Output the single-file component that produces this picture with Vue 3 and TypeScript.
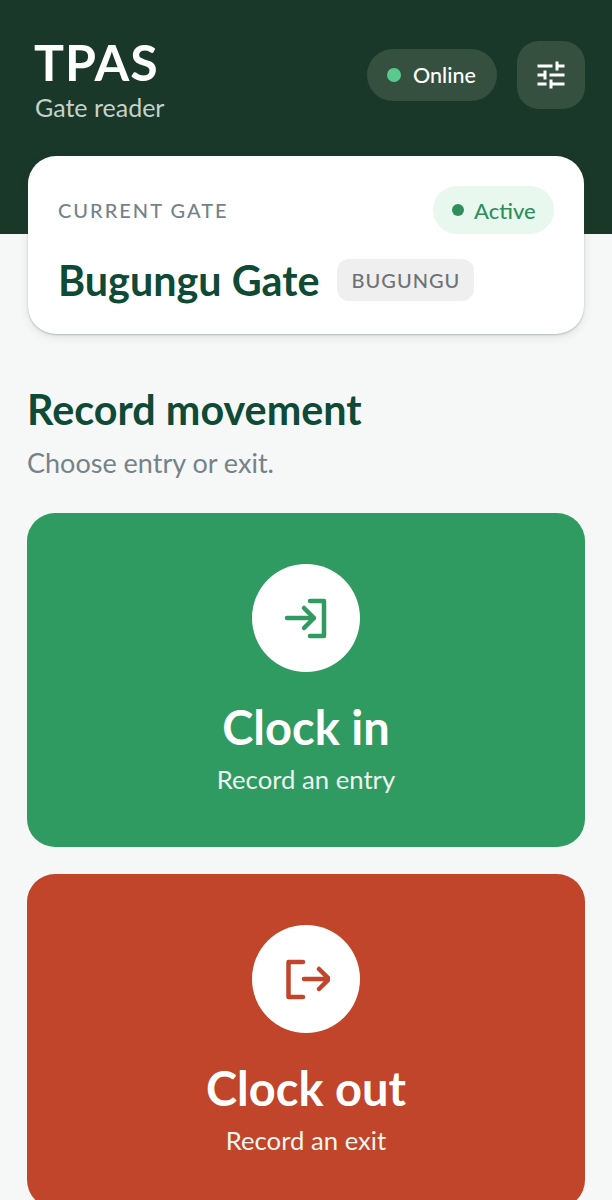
<script setup lang="ts">
const actions = [
  { key: 'in', title: 'Clock in', sub: 'Record an entry' },
  { key: 'out', title: 'Clock out', sub: 'Record an exit' },
];
</script>

<template>
  <div class="page">
    <header class="header">
      <div class="brand">
        <h1 class="title">TPAS</h1>
        <p class="subtitle">Gate reader</p>
      </div>
      <div class="tools">
        <div class="online"><span class="online-dot"></span>Online</div>
        <button class="settings" aria-label="Settings">
          <svg width="36" height="36" viewBox="0 0 24 24" fill="#fff">
            <path d="M3 17v2h6v-2H3zM3 5v2h10V5H3zm10 16v-2h8v-2h-8v-2h-2v6h2zM7 9v2H3v2h4v2h2V9H7zm14 4v-2H11v2h10zm-6-4h2V7h4V5h-4V3h-2v6z" />
          </svg>
        </button>
      </div>
    </header>

    <main class="main">
      <section class="gate-card">
        <div class="gate-top">
          <span class="gate-label">CURRENT GATE</span>
          <span class="active"><span class="active-dot"></span>Active</span>
        </div>
        <div class="gate-row">
          <span class="gate-name">Bugungu Gate</span>
          <span class="gate-code">BUGUNGU</span>
        </div>
      </section>

      <h2 class="section-title">Record movement</h2>
      <p class="section-sub">Choose entry or exit.</p>

      <div class="actions">
        <button v-for="a in actions" :key="a.key" class="action" :class="a.key">
          <span class="circle">
            <svg v-if="a.key === 'in'" width="48" height="48" viewBox="0 0 48 48" fill="none" stroke="#2f9b60" stroke-width="4.5" stroke-linecap="round" stroke-linejoin="round">
              <path d="M28 7h14v35H28" />
              <path d="M5 24h27M22 14l10 10-10 10" />
            </svg>
            <svg v-else width="48" height="48" viewBox="0 0 48 48" fill="none" stroke="#c0452a" stroke-width="4.5" stroke-linecap="round" stroke-linejoin="round">
              <path d="M21 7H6.500v35H21" />
              <path d="M22 24h25M37 14l10 10-10 10" />
            </svg>
          </span>
          <span class="action-title">{{ a.title }}</span>
          <span class="action-sub">{{ a.sub }}</span>
        </button>
      </div>
    </main>
  </div>
</template>

<style>
html, body { margin: 0; background: #f6f7f7; }
</style>

<style scoped>
.page {
  width: 612px;
  height: 1200px;
  overflow: hidden;
  background: #f6f7f7;
  font-family: Lato, "Open Sans", sans-serif;
}
.header {
  height: 234px;
  box-sizing: border-box;
  background: #1a3829;
  padding: 36px 27px 0 35px;
  display: flex;
  justify-content: space-between;
  align-items: flex-start;
}
.title {
  margin: 0 0 0 -1px;
  font-size: 50px;
  line-height: 52px;
  letter-spacing: 1px;
  font-weight: 700;
  color: #fff;
}
.subtitle {
  margin: 2px 0 0;
  font-size: 25px;
  line-height: 34px;
  color: #c5d2ca;
}
.tools {
  display: flex;
  align-items: center;
  gap: 20px;
  margin-top: 5px;
}
.online {
  width: 130px;
  height: 52px;
  box-sizing: border-box;
  border-radius: 26px;
  background: #35503f;
  display: flex;
  align-items: center;
  gap: 12px;
  padding-left: 20px;
  color: #fff;
  font-size: 21.500px;
  font-weight: 500;
}
.online-dot {
  width: 14px;
  height: 14px;
  border-radius: 50%;
  background: #5ac98d;
}
.settings {
  width: 68px;
  height: 68px;
  border: 0;
  padding: 0;
  border-radius: 22px;
  background: #35503f;
  display: flex;
  align-items: center;
  justify-content: center;
}
.main {
  padding: 0 27px;
  margin-top: -78px;
}
.gate-card {
  height: 178px;
  box-sizing: border-box;
  margin: 0 1px;
  padding: 30px 30px 0;
  background: #fff;
  border-radius: 28px;
  box-shadow: 0 1px 2px rgba(60, 80, 70, 0.3), 0 3px 10px rgba(40, 60, 50, 0.1);
}
.gate-top {
  display: flex;
  justify-content: space-between;
  align-items: center;
}
.gate-label {
  font-size: 20px;
  letter-spacing: 2px;
  color: #76828a;
  font-weight: 500;
}
.active {
  width: 121px;
  height: 48px;
  box-sizing: border-box;
  border-radius: 24px;
  background: #e9f8ef;
  display: flex;
  align-items: center;
  gap: 10px;
  padding-left: 19px;
  color: #2f8f5b;
  font-size: 22px;
  font-weight: 500;
}
.active-dot {
  width: 12px;
  height: 12px;
  border-radius: 50%;
  background: #2f8f5b;
}
.gate-row {
  display: flex;
  align-items: center;
  gap: 18px;
  margin-top: 25px;
}
.gate-name {
  font-size: 41.300px;
  line-height: 42px;
  font-weight: 700;
  color: #0f4a37;
}
.gate-code {
  width: 137px;
  height: 42px;
  border-radius: 12px;
  background: #efefef;
  color: #6d7275;
  font-size: 20px;
  letter-spacing: 1px;
  font-weight: 500;
  display: flex;
  align-items: center;
  justify-content: center;
}
.section-title {
  margin: 51px 0 0;
  font-size: 41.300px;
  line-height: 48px;
  font-weight: 700;
  color: #0f4a37;
}
.section-sub {
  margin: 12px 0 0;
  font-size: 27px;
  line-height: 36px;
  color: #76828a;
}
.actions {
  display: flex;
  flex-direction: column;
  gap: 27px;
  margin-top: 32px;
}
.action {
  flex: none;
  width: 558px;
  height: 334px;
  border: 0;
  padding: 51px 0 0;
  border-radius: 28px;
  color: #fff;
  font-family: inherit;
  display: flex;
  flex-direction: column;
  align-items: center;
  box-sizing: border-box;
}
.action.in { background: #2f9b60; }
.action.out { background: #c0452a; }
.circle {
  width: 108px;
  height: 108px;
  border-radius: 50%;
  background: #fff;
  display: flex;
  align-items: center;
  justify-content: center;
}
.action-title {
  margin-top: 27px;
  font-size: 47px;
  line-height: 56px;
  font-weight: 700;
}
.action-sub {
  margin-top: 8px;
  font-size: 25.700px;
  line-height: 32px;
  color: #eef5f0;
}
</style>
